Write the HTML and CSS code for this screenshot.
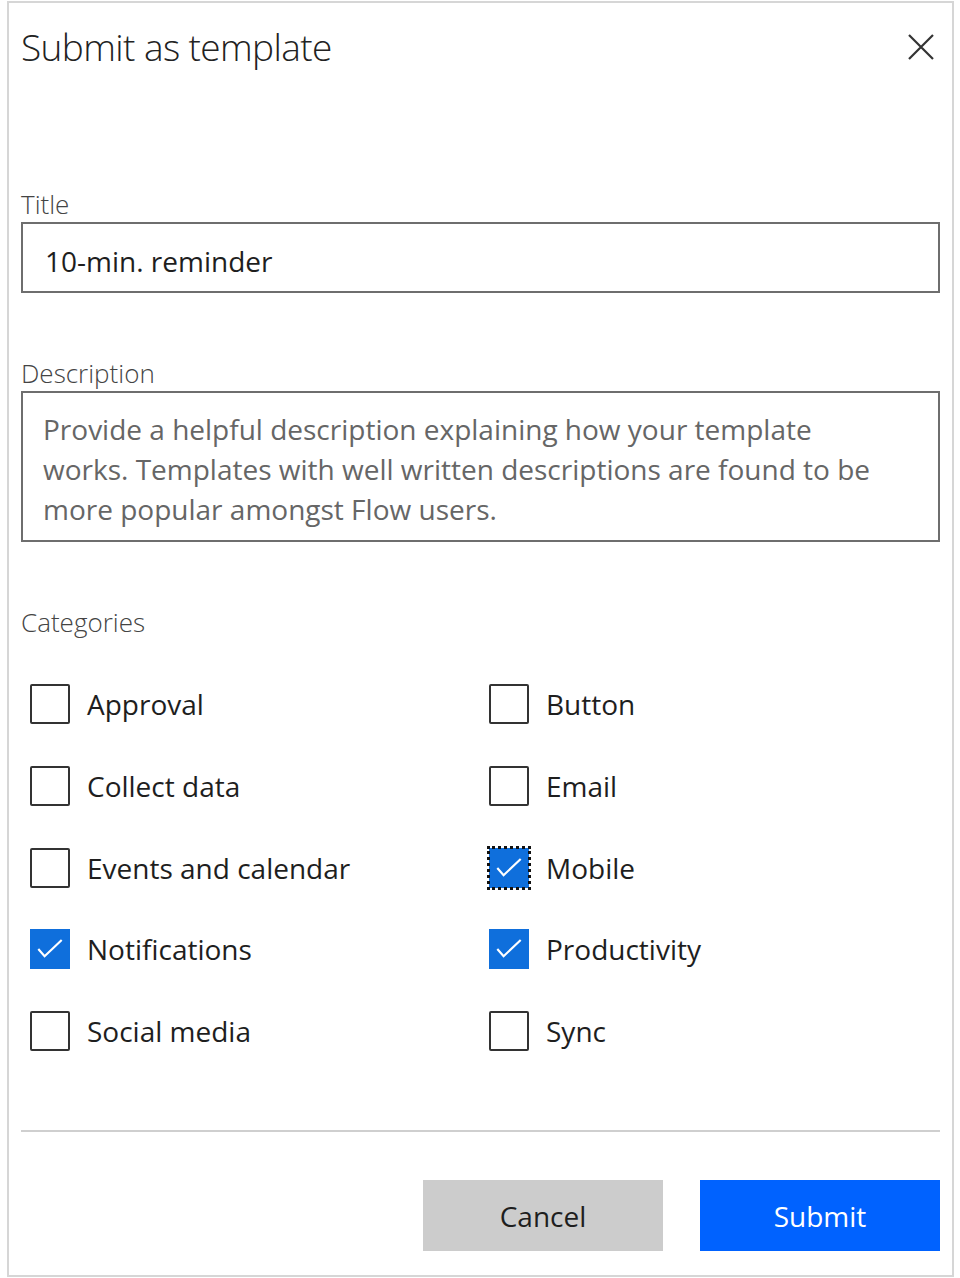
FILE: index.html
```html
<!DOCTYPE html>
<html lang="en">
<head>
    <meta charset="UTF-8">
    <title>Submit as template</title>
    <link rel="stylesheet" href="styles.css">
</head>
<body>
    <div class="panel">
        <header class="panel-header">
            <h1>Submit as template</h1>
            <button class="close-btn" aria-label="Close">
                <svg width="26" height="26" viewBox="0 0 26 26">
                    <path d="M1 1 L25 25 M25 1 L1 25" stroke="#333" stroke-width="2.2" fill="none"/>
                </svg>
            </button>
        </header>

        <div class="form-group">
            <label for="title">Title</label>
            <div class="input" id="title">10-min. reminder</div>
        </div>

        <div class="form-group">
            <label for="desc">Description</label>
            <div class="textarea" id="desc">Provide a helpful description explaining how your template works. Templates with well written descriptions are found to be more popular amongst Flow users.</div>
        </div>

        <div class="categories">
            <div class="section-label">Categories</div>
            <div class="check-grid">
                <div class="check"><span class="box"></span>Approval</div>
                <div class="check"><span class="box"></span>Button</div>
                <div class="check"><span class="box"></span>Collect data</div>
                <div class="check"><span class="box"></span>Email</div>
                <div class="check"><span class="box"></span>Events and calendar</div>
                <div class="check"><span class="box checked focused"><svg viewBox="0 0 40 40"><path d="M7 20 L14 28 L33 10" stroke="#fff" stroke-width="2.4" fill="none"/></svg></span>Mobile</div>
                <div class="check"><span class="box checked"><svg viewBox="0 0 40 40"><path d="M7 20 L14 28 L33 10" stroke="#fff" stroke-width="2.4" fill="none"/></svg></span>Notifications</div>
                <div class="check"><span class="box checked"><svg viewBox="0 0 40 40"><path d="M7 20 L14 28 L33 10" stroke="#fff" stroke-width="2.4" fill="none"/></svg></span>Productivity</div>
                <div class="check"><span class="box"></span>Social media</div>
                <div class="check"><span class="box"></span>Sync</div>
            </div>
        </div>

        <footer class="panel-footer">
            <button class="btn btn-cancel">Cancel</button>
            <button class="btn btn-submit">Submit</button>
        </footer>
    </div>
</body>
</html>
```

FILE: styles.css
```css
* {
    margin: 0;
    padding: 0;
    box-sizing: border-box;
}

body {
    font-family: 'Open Sans', 'Noto Sans', sans-serif;
    background: #fff;
    color: #222;
}

.panel {
    width: 947px;
    height: 1276px;
    margin: 1px 0 0 7px;
    padding: 0 12px;
    border: 2px solid #d6d6d6;
    background: #fff;
}

.panel-header {
    display: flex;
    justify-content: space-between;
    align-items: flex-start;
    height: 183px;
}

.panel-header h1 {
    font-size: 37px;
    font-weight: 300;
    color: #222;
    letter-spacing: -0.6px;
    margin-top: 18px;
}

.close-btn {
    background: none;
    border: none;
    margin-top: 31px;
    margin-right: 6px;
    cursor: pointer;
}

.form-group {
    margin-bottom: 62px;
}

.form-group label,
.section-label {
    display: block;
    font-size: 26px;
    font-weight: 300;
    color: #444;
    line-height: 36px;
}

.input {
    height: 71px;
    border: 2px solid #6e6e6e;
    padding: 7px 22px 0;
    font-size: 28px;
    line-height: 60px;
    color: #1e1e1e;
}

.textarea {
    height: 151px;
    border: 2px solid #6e6e6e;
    padding: 16px 50px 14px 20px;
    font-size: 28px;
    line-height: 40px;
    color: #666;
}

.categories {
    margin-top: 62px;
}

.section-label {
    margin-bottom: 44px;
}

.check-grid {
    display: grid;
    grid-template-columns: 459px 1fr;
    row-gap: 41.75px;
    padding-left: 9px;
}

.check {
    display: flex;
    align-items: center;
    gap: 17px;
    height: 40px;
    font-size: 28px;
    color: #1e1e1e;
}

.box {
    width: 40px;
    height: 40px;
    border: 2px solid #333;
    border-radius: 2px;
    flex-shrink: 0;
    display: flex;
}

.box svg {
    width: 100%;
    height: 100%;
}

.box.checked {
    background: #0f6fdc;
    border-color: #0f6fdc;
    border-radius: 0;
}

.box.focused {
    outline: 3px dotted #111;
    outline-offset: -1px;
}

.panel-footer {
    margin-top: 79px;
    border-top: 2px solid #cfcfcf;
    padding-top: 48px;
    display: flex;
    justify-content: flex-end;
    gap: 37px;
}

.btn {
    width: 240px;
    height: 71px;
    border: none;
    font-family: 'Open Sans', 'Noto Sans', sans-serif;
    font-size: 28px;
    cursor: pointer;
}

.btn-cancel {
    background: #cccccc;
    color: #1e1e1e;
}

.btn-submit {
    background: #0062ff;
    color: #fff;
}
```
